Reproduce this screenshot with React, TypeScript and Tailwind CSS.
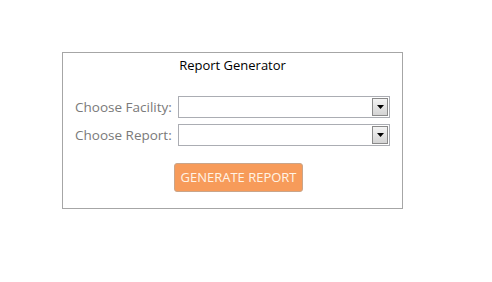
import React from 'react'

const font = { fontFamily: '"Open Sans", "Noto Sans", sans-serif' }

function Dropdown() {
  return (
    <div className="w-[212px] h-[22px] border border-[#abadb3] bg-white flex justify-end items-stretch p-px">
      <div className="w-[16px] border border-[#8a8a8a] bg-gradient-to-b from-[#f4f4f4] to-[#d4d4d4] flex items-center justify-center">
        <svg width="7" height="4" viewBox="0 0 7 4">
          <path d="M0 0h7L3.5 4z" fill="#000" />
        </svg>
      </div>
    </div>
  )
}

export default function App() {
  const rows = ['Choose Facility:', 'Choose Report:']
  return (
    <div className="w-[492px] h-[282px] bg-white pt-[52px] pl-[62px]" style={font}>
      <div className="w-[341px] h-[157px] border border-[#a6a6a6] flex flex-col">
        <div className="text-center text-[13px] leading-[18px] text-black mt-[3px]">Report Generator</div>

        <div className="mt-[22px] flex flex-col gap-[6px] pl-[12px]">
          {rows.map(r => (
            <div key={r} className="flex items-center">
              <span className="w-[103px] text-[13.5px] text-[#7a7a7a] leading-[22px] whitespace-nowrap">{r}</span>
              <Dropdown />
            </div>
          ))}
        </div>

        <div className="mt-[17px] pl-[111px]">
          <button className="w-[129px] h-[29px] bg-[#f79b5a] border border-[#c9a58a] rounded-[3px] text-[13px] text-[#fff3e6] leading-none">
            GENERATE REPORT
          </button>
        </div>
      </div>
    </div>
  )
}
